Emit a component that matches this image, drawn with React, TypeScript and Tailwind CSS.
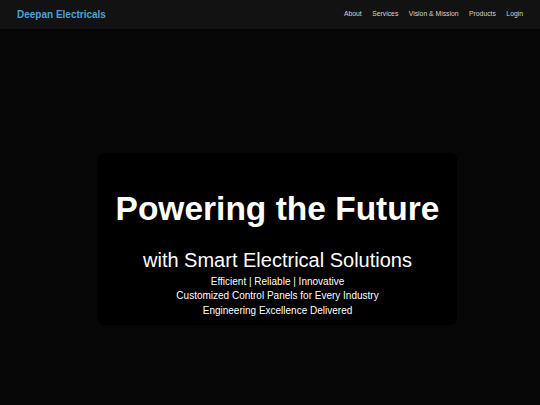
import React from 'react';

const links = ['About', 'Services', 'Vision & Mission', 'Products', 'Login'];

export default function App() {
  return (
    <div className="min-h-screen w-full bg-[#060606] flex flex-col" style={{ fontFamily: '"Liberation Sans", Arial, sans-serif' }}>
      {/* Navbar */}
      <nav className="h-[29px] bg-[#121212] flex items-center justify-between pl-[17px] pr-[17px] shrink-0">
        <div className="text-[10px] font-bold text-[#4ba3d6]">Deepan Electricals</div>
        <ul className="flex items-center gap-[10.5px] text-[6.8px] text-[#d4d4d4]">
          {links.map(l => (
            <li key={l}>{l}</li>
          ))}
        </ul>
      </nav>

      {/* Hero */}
      <div className="flex justify-center pl-[15px] pt-[124px]">
        <div className="w-[359px] h-[172px] bg-black rounded-[6px] flex flex-col items-center text-white text-center pt-[39px]">
          <h1 className="text-[33.5px] font-bold leading-none">Powering the Future</h1>
          <h2 className="text-[20px] leading-none mt-[24px]">with Smart Electrical Solutions</h2>
          <p className="text-[10px] leading-[14.5px] mt-[5px]">Efficient | Reliable | Innovative</p>
          <p className="text-[10px] leading-[14.5px]">Customized Control Panels for Every Industry</p>
          <p className="text-[10px] leading-[14.5px]">Engineering Excellence Delivered</p>
        </div>
      </div>
    </div>
  );
}
